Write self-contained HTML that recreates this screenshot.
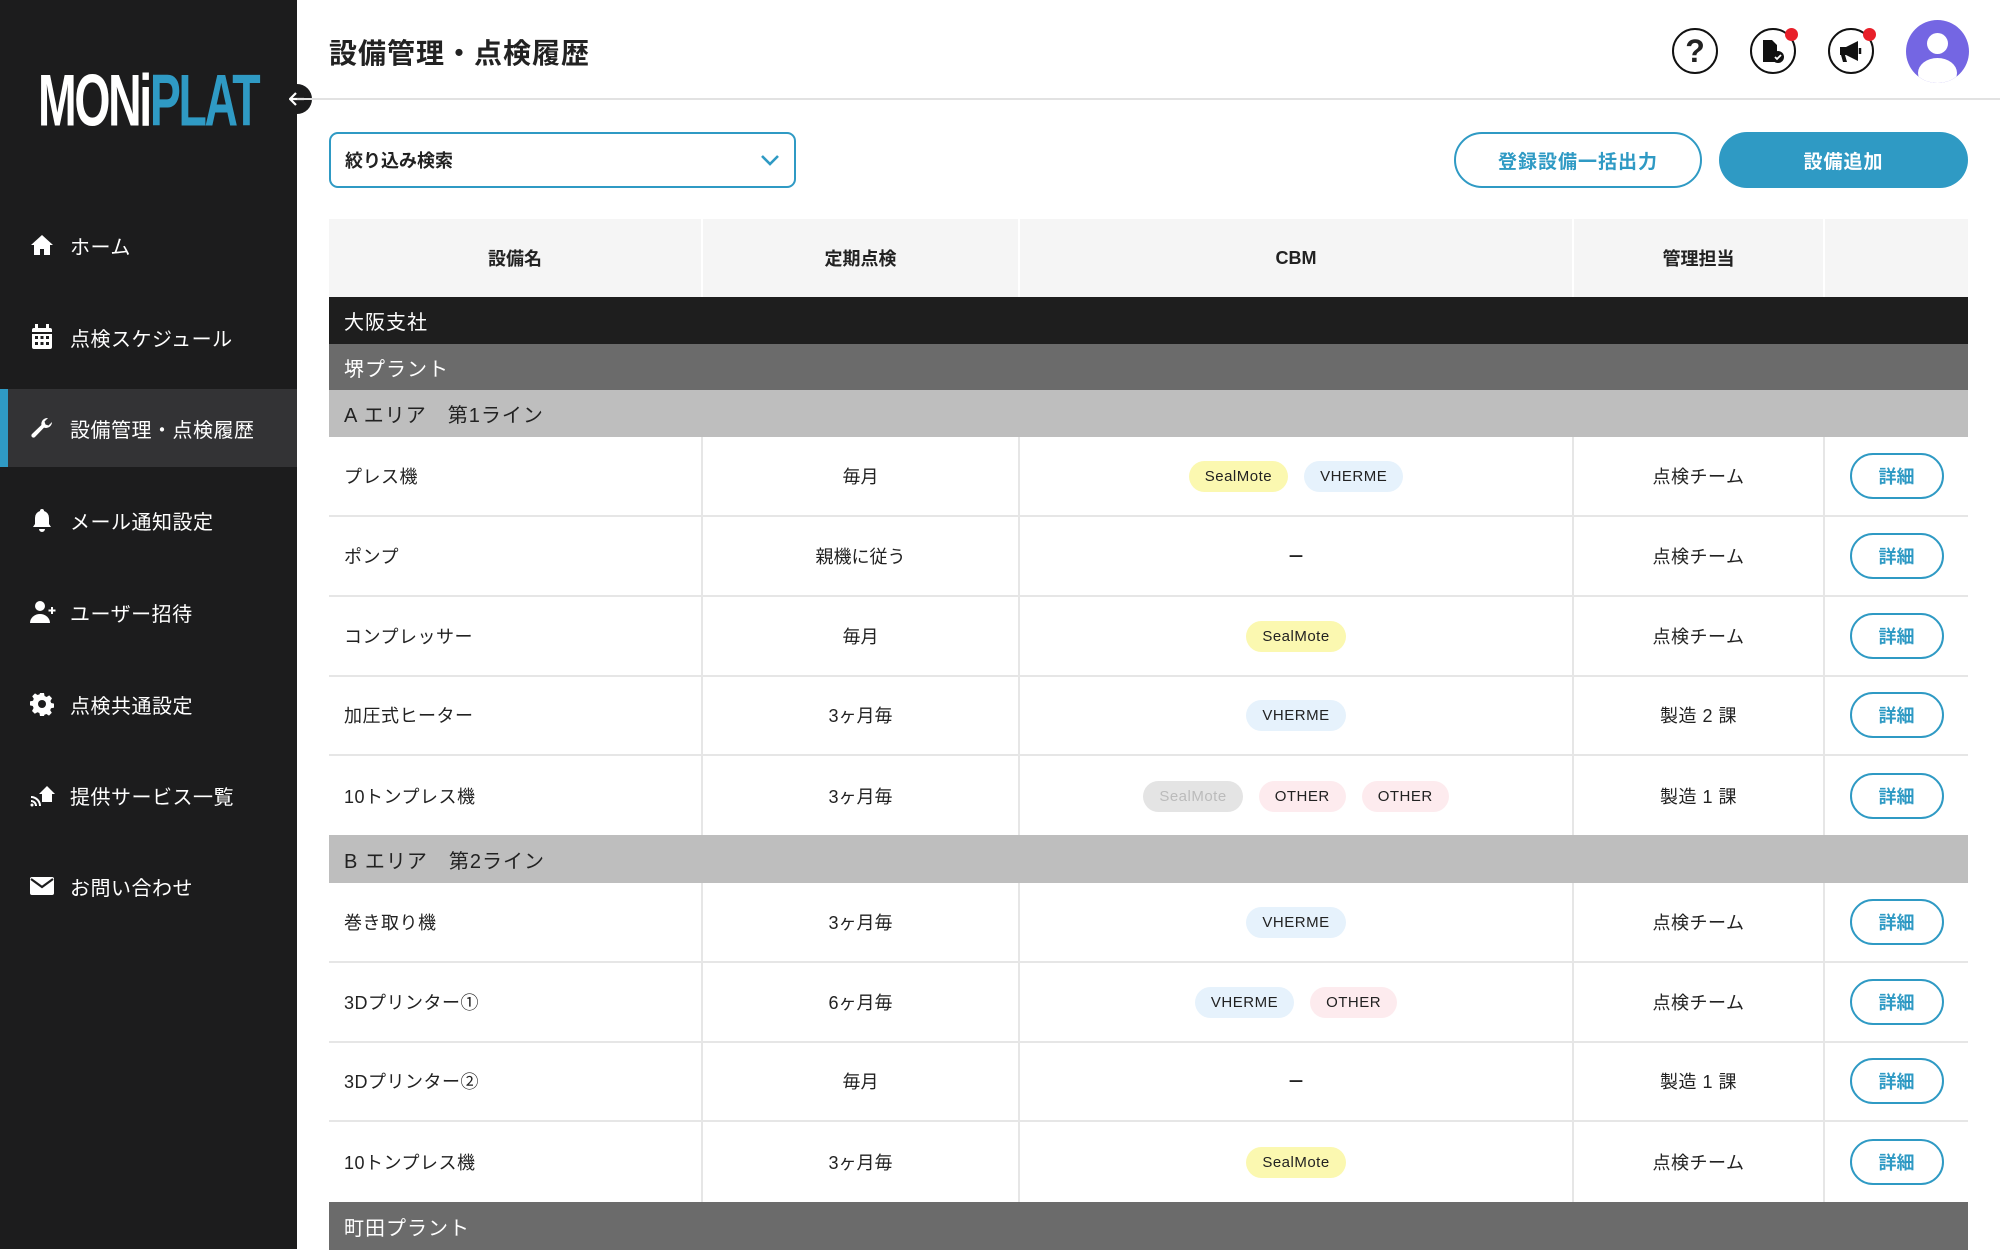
<!DOCTYPE html>
<html><head><meta charset="utf-8">
<style>
*{box-sizing:border-box;margin:0;padding:0}
body{width:2000px;height:1249px;overflow:hidden;background:#fff;font-family:"Liberation Sans","Noto Sans CJK JP",sans-serif;color:#222;position:relative}
.side{position:absolute;left:0;top:0;width:297px;height:1249px;background:#1c1c1d}
.logo{position:absolute;left:38px;top:64px;font-family:"Liberation Sans","Noto Sans CJK JP",sans-serif;font-weight:bold;font-size:80px;letter-spacing:-4px;transform:scale(0.58,0.92);transform-origin:left top;line-height:80px;color:#fff}
.logo span{color:#2f9ac4}
.nav{position:absolute;left:0;width:297px;height:78px;display:flex;align-items:center;color:#fff;font-size:20px;letter-spacing:.5px}
.nav svg{position:absolute;left:30px}
.nav .t{position:absolute;left:70px}
.nav.act{background:#333335}
.nav.act:before{content:"";position:absolute;left:0;top:0;width:8px;height:100%;background:#2f9ac4}
.coll{position:absolute;left:282px;top:84px;width:30px;height:30px;border-radius:50%;background:#1c1c1d;display:flex;align-items:center;justify-content:center}
.title{position:absolute;left:329px;top:32px;font-size:28px;font-weight:bold;letter-spacing:1px}
.hline{position:absolute;left:297px;right:0;top:98px;height:2px;background:#e2e2e2}
.ic{position:absolute;top:28px;width:46px;height:46px;border:2px solid #111;border-radius:50%;display:flex;align-items:center;justify-content:center}
.dot{position:absolute;right:-4px;top:-2px;width:13px;height:13px;border-radius:50%;background:#e8202a}
.filter{position:absolute;left:329px;top:132px;width:467px;height:56px;border:2px solid #2f9ac4;border-radius:9px;font-size:18px;font-weight:bold;padding-left:14px;display:flex;align-items:center}
.btn{position:absolute;top:132px;height:56px;border-radius:28px;font-size:19px;font-weight:bold;display:flex;align-items:center;justify-content:center;letter-spacing:1px}
.tbl{position:absolute;left:329px;top:219px;width:1639px}
.hd{position:absolute;top:0;height:78px;background:#f5f5f5;display:flex;align-items:center;justify-content:center;font-weight:bold;font-size:18px}
.grp{position:absolute;left:0;width:1639px;display:flex;align-items:center;padding-left:15px;font-size:20px;letter-spacing:1px}
.row{position:absolute;left:0;width:1639px;height:80px;border-bottom:2px solid #e6e6e6;font-size:18px}
.row>div{position:absolute;top:0;height:100%;display:flex;align-items:center;border-right:2px solid #e6e6e6}
.c1{left:0;width:374px;padding-left:15px;letter-spacing:.5px}
.c2{left:374px;width:317px;justify-content:center}
.c3{left:691px;width:554px;justify-content:center;gap:16px}
.c4{left:1245px;width:251px;justify-content:center;letter-spacing:.5px}
.c5{left:1496px;width:143px;justify-content:center;border-right:none!important}
.tag{height:31px;border-radius:16px;padding:0 16px;font-size:15px;display:flex;align-items:center;letter-spacing:.5px}
.y{background:#fbf8b0}.b{background:#e6f2fc}.p{background:#fdebee}.g{background:#e4e4e4;color:#bbb}
.det{width:94px;height:46px;border:2px solid #2f9ac4;border-radius:23px;color:#2f9ac4;font-weight:bold;font-size:18px;display:flex;align-items:center;justify-content:center}
</style></head><body>
<div class="side">
<div class="logo">MONi<span>PLAT</span></div>
<div class="nav" style="top:206px"><svg width="24" height="24" viewBox="0 0 24 24"><path d="M12 2L1 12h3v10h6v-6h4v6h6V12h3z" fill="#fff"/></svg><span class="t">ホーム</span></div>
<div class="nav" style="top:298px"><svg width="24" height="26" viewBox="0 0 24 26"><rect x="2" y="4" width="20" height="21" rx="2" fill="#fff"/><rect x="5" y="0" width="3" height="6" fill="#fff"/><rect x="16" y="0" width="3" height="6" fill="#fff"/><g fill="#1c1c1d"><rect x="2" y="8" width="20" height="2"/><rect x="5" y="12" width="3" height="3"/><rect x="10.5" y="12" width="3" height="3"/><rect x="16" y="12" width="3" height="3"/><rect x="5" y="18" width="3" height="3"/><rect x="10.5" y="18" width="3" height="3"/><rect x="16" y="18" width="3" height="3"/></g></svg><span class="t">点検スケジュール</span></div>
<div class="nav act" style="top:389px"><svg width="24" height="24" viewBox="0 0 24 24"><path d="M22 6a6 6 0 0 1-8 5.6L5 21a2 2 0 0 1-3-3l9.4-9A6 6 0 0 1 18 2l-3.5 3.5 1 3 3 1z" fill="#fff"/></svg><span class="t">設備管理・点検履歴</span></div>
<div class="nav" style="top:481px"><svg width="24" height="24" viewBox="0 0 24 24"><path d="M12 1a2 2 0 0 1 2 2 7 7 0 0 1 5 7v6l2 3H3l2-3v-6a7 7 0 0 1 5-7 2 2 0 0 1 2-2zM9 21h6a3 3 0 0 1-6 0z" fill="#fff"/></svg><span class="t">メール通知設定</span></div>
<div class="nav" style="top:573px"><svg width="28" height="24" viewBox="0 0 28 24"><circle cx="10" cy="6" r="5" fill="#fff"/><path d="M0 23a10 9 0 0 1 20 0z" fill="#fff"/><path d="M22 7v7M18.5 10.5h7" stroke="#fff" stroke-width="2"/></svg><span class="t">ユーザー招待</span></div>
<div class="nav" style="top:665px"><svg width="24" height="24" viewBox="0 0 24 24"><path d="M10 1h4l.6 3 2 1 2.6-1.6 2.8 2.8L20.4 9l.8 2 2.8.6v4l-3 .6-.8 2 1.6 2.6-2.8 2.8L16.4 22l-2 .8-.4 1.2h-4l-.6-3-2-.8-2.6 1.6-2.8-2.8L3.6 16l-.8-2L0 13.4v-4l3-.6.8-2L2.2 4.2 5 1.4 7.6 3l2-.8z" fill="#fff"/><circle cx="12" cy="12" r="4" fill="#1c1c1d"/></svg><span class="t">点検共通設定</span></div>
<div class="nav" style="top:756px"><svg width="26" height="24" viewBox="0 0 26 24"><path d="M9 11L17 3l8 8h-3v8h-10v-8z" fill="#fff"/><path d="M1 14a9 9 0 0 1 9 9M1 18a5 5 0 0 1 5 5" stroke="#fff" stroke-width="2" fill="none"/><circle cx="2" cy="22" r="1.5" fill="#fff"/></svg><span class="t">提供サービス一覧</span></div>
<div class="nav" style="top:847px"><svg width="24" height="20" viewBox="0 0 24 20"><rect x="0" y="1" width="24" height="18" rx="2" fill="#fff"/><path d="M1 3l11 8 11-8" stroke="#1c1c1d" stroke-width="2.2" fill="none"/></svg><span class="t">お問い合わせ</span></div>
</div>
<div class="coll"><svg width="16" height="14" viewBox="0 0 16 14"><path d="M15 7H2M7 1L1 7l6 6" stroke="#fff" stroke-width="2.2" fill="none"/></svg></div>

<div class="title">設備管理・点検履歴</div>
<div class="hline"></div>
<div class="ic" style="left:1672px"><span style="font-size:32px;font-weight:bold">?</span></div>
<div class="ic" style="left:1750px"><svg width="24" height="26" viewBox="0 0 24 26"><path d="M2 2h9l5 5v7a6 6 0 0 0-2 10H2z" fill="#111"/><circle cx="17" cy="19" r="6" fill="#111"/><path d="M14 19l2 2 4-4" stroke="#fff" stroke-width="1.8" fill="none"/></svg><div class="dot"></div></div>
<div class="ic" style="left:1828px"><svg width="26" height="24" viewBox="0 0 26 24"><path d="M2 8h6l12-6v20L8 16H7l2 7H5l-2-7H2z" fill="#111"/><path d="M22 9v6" stroke="#111" stroke-width="2.5"/></svg><div class="dot"></div></div>
<div style="position:absolute;left:1906px;top:20px;width:63px;height:63px;border-radius:50%;background:#7466e3;overflow:hidden"><div style="position:absolute;left:21px;top:13px;width:21px;height:21px;border-radius:50%;background:#fff"></div><div style="position:absolute;left:12px;top:38px;width:39px;height:30px;border-radius:50%;background:#fff"></div></div>

<div class="filter">絞り込み検索<svg style="position:absolute;right:14px" width="20" height="12" viewBox="0 0 20 12"><path d="M2 2l8 8 8-8" stroke="#2f9ac4" stroke-width="2.6" fill="none"/></svg></div>
<div class="btn" style="left:1454px;width:248px;border:2px solid #2f9ac4;color:#2f9ac4">登録設備一括出力</div>
<div class="btn" style="left:1719px;width:249px;background:#2f9ac4;color:#fff">設備追加</div>

<div class="tbl">
<div class="hd" style="left:0;width:372px">設備名</div>
<div class="hd" style="left:374px;width:315px">定期点検</div>
<div class="hd" style="left:691px;width:552px">CBM</div>
<div class="hd" style="left:1245px;width:249px">管理担当</div>
<div class="hd" style="left:1496px;width:143px"></div>

<div class="grp" style="top:78px;height:47px;background:#1e1e1e;color:#fff">大阪支社</div>
<div class="grp" style="top:125px;height:46px;background:#6b6b6b;color:#fff">堺プラント</div>
<div class="grp" style="top:171px;height:47px;background:#bebebe;color:#222">A エリア　第1ライン</div>

<div class="row" style="top:218px"><div class="c1">プレス機</div><div class="c2">毎月</div><div class="c3"><span class="tag y">SealMote</span><span class="tag b">VHERME</span></div><div class="c4">点検チーム</div><div class="c5"><span class="det">詳細</span></div></div>
<div class="row" style="top:298px"><div class="c1">ポンプ</div><div class="c2">親機に従う</div><div class="c3"><b>－</b></div><div class="c4">点検チーム</div><div class="c5"><span class="det">詳細</span></div></div>
<div class="row" style="top:378px"><div class="c1">コンプレッサー</div><div class="c2">毎月</div><div class="c3"><span class="tag y">SealMote</span></div><div class="c4">点検チーム</div><div class="c5"><span class="det">詳細</span></div></div>
<div class="row" style="top:457px"><div class="c1">加圧式ヒーター</div><div class="c2">3ヶ月毎</div><div class="c3"><span class="tag b">VHERME</span></div><div class="c4">製造 2 課</div><div class="c5"><span class="det">詳細</span></div></div>
<div class="row" style="top:537px;border-bottom:none"><div class="c1">10トンプレス機</div><div class="c2">3ヶ月毎</div><div class="c3"><span class="tag g">SealMote</span><span class="tag p">OTHER</span><span class="tag p">OTHER</span></div><div class="c4">製造 1 課</div><div class="c5"><span class="det">詳細</span></div></div>

<div class="grp" style="top:616px;height:48px;background:#bebebe;color:#222">B エリア　第2ライン</div>

<div class="row" style="top:664px"><div class="c1">巻き取り機</div><div class="c2">3ヶ月毎</div><div class="c3"><span class="tag b">VHERME</span></div><div class="c4">点検チーム</div><div class="c5"><span class="det">詳細</span></div></div>
<div class="row" style="top:744px"><div class="c1">3Dプリンター①</div><div class="c2">6ヶ月毎</div><div class="c3"><span class="tag b">VHERME</span><span class="tag p">OTHER</span></div><div class="c4">点検チーム</div><div class="c5"><span class="det">詳細</span></div></div>
<div class="row" style="top:823px"><div class="c1">3Dプリンター②</div><div class="c2">毎月</div><div class="c3"><b>－</b></div><div class="c4">製造 1 課</div><div class="c5"><span class="det">詳細</span></div></div>
<div class="row" style="top:903px;border-bottom:none"><div class="c1">10トンプレス機</div><div class="c2">3ヶ月毎</div><div class="c3"><span class="tag y">SealMote</span></div><div class="c4">点検チーム</div><div class="c5"><span class="det">詳細</span></div></div>

<div class="grp" style="top:983px;height:48px;background:#6b6b6b;color:#fff">町田プラント</div>
</div>
</body></html>
